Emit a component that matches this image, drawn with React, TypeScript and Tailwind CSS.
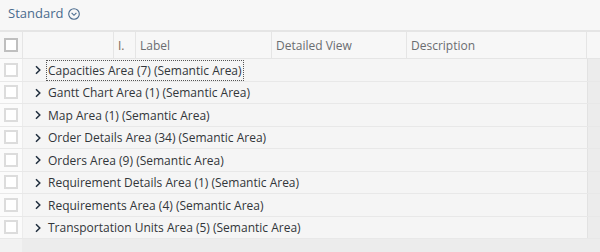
import React from 'react';

const rows: string[] = [
  'Capacities Area (7) (Semantic Area)',
  'Gantt Chart Area (1) (Semantic Area)',
  'Map Area (1) (Semantic Area)',
  'Order Details Area (34) (Semantic Area)',
  'Orders Area (9) (Semantic Area)',
  'Requirement Details Area (1) (Semantic Area)',
  'Requirements Area (4) (Semantic Area)',
  'Transportation Units Area (5) (Semantic Area)',
];

const Check: React.FC<{ head?: boolean }> = ({ head }) => (
  <div
    className={
      head
        ? 'w-[14px] h-[14px] border-2 border-[#bfbfbf] bg-white'
        : 'w-[14px] h-[14px] border-2 border-[#dcdcdc] bg-white'
    }
  />
);

const Chevron: React.FC = () => (
  <svg width="8" height="10" viewBox="0 0 8 10" className="shrink-0">
    <path d="M2 1.2 L5.8 5 L2 8.8" fill="none" stroke="#1f2d3d" strokeWidth="1.5" />
  </svg>
);

export default function App() {
  return (
    <div
      className="w-[600px] h-[252px] bg-[#f7f7f7] overflow-hidden text-[#32363a]"
      style={{ fontFamily: '"Open Sans", "Noto Sans", sans-serif' }}
    >
      {/* toolbar */}
      <div className="h-[30px] flex items-center pl-[8px] pb-[2px] gap-[5px]">
        <span className="text-[13px] text-[#4a6b8e]">Standard</span>
        <svg width="12" height="12" viewBox="0 0 12 12">
          <circle cx="6" cy="6" r="5.3" fill="none" stroke="#4a6b8e" strokeWidth="1.1" />
          <path d="M3.6 4.9 L6 7.3 L8.4 4.9" fill="none" stroke="#4a6b8e" strokeWidth="1.1" />
        </svg>
      </div>

      {/* header */}
      <div className="flex h-[29px] border-t-2 border-b border-[#e5e5e5] bg-[#f7f7f7] text-[12px] text-[#6a6d70]">
        <div className="w-[23px] shrink-0 flex items-center justify-center border-r border-[#e5e5e5]">
          <Check head />
        </div>
        <div className="w-[91px] shrink-0 border-r border-[#e5e5e5]" />
        <div className="w-[22px] shrink-0 border-r border-[#e5e5e5] flex items-center pl-[4px] pt-[1px] text-[#7d6a55]">
          I.
        </div>
        <div className="w-[136px] shrink-0 border-r border-[#e5e5e5] flex items-center pl-[4px] pt-[1px]">Label</div>
        <div className="w-[135px] shrink-0 border-r border-[#e5e5e5] flex items-center pl-[4px] pt-[1px]">
          Detailed View
        </div>
        <div className="w-[180px] shrink-0 border-r border-[#e5e5e5] flex items-center pl-[4px] pt-[1px]">
          Description
        </div>
        <div className="flex-1" />
      </div>

      {/* body */}
      <div className="flex flex-col">
        {rows.map((r, i) => (
          <div key={i} className="flex h-[22.5px] border-b border-[#e8e8e8] text-[12px]">
            <div className="w-[23px] shrink-0 flex items-center justify-center bg-[#fbfbfb] border-r border-[#ececec]">
              <Check />
            </div>
            <div className="w-[564px] shrink-0 flex items-center pl-[11px] pt-[1px] bg-[#f5f5f5]">
              <Chevron />
              <span
                className={
                  i === 0
                    ? 'ml-[5px] px-[1px] leading-[19px] outline-1 outline-dotted outline-[#555]'
                    : 'ml-[5px] px-[1px] leading-[19px]'
                }
              >
                {r}
              </span>
            </div>
            <div className="flex-1 bg-[#ececec] border-l border-[#e2e2e2]" />
          </div>
        ))}
        <div className="flex h-[20px]">
          <div className="w-[23px] bg-[#f2f2f2] border-r border-[#ececec]" />
          <div className="flex-1 bg-[#ececec]" />
        </div>
      </div>
    </div>
  );
}
